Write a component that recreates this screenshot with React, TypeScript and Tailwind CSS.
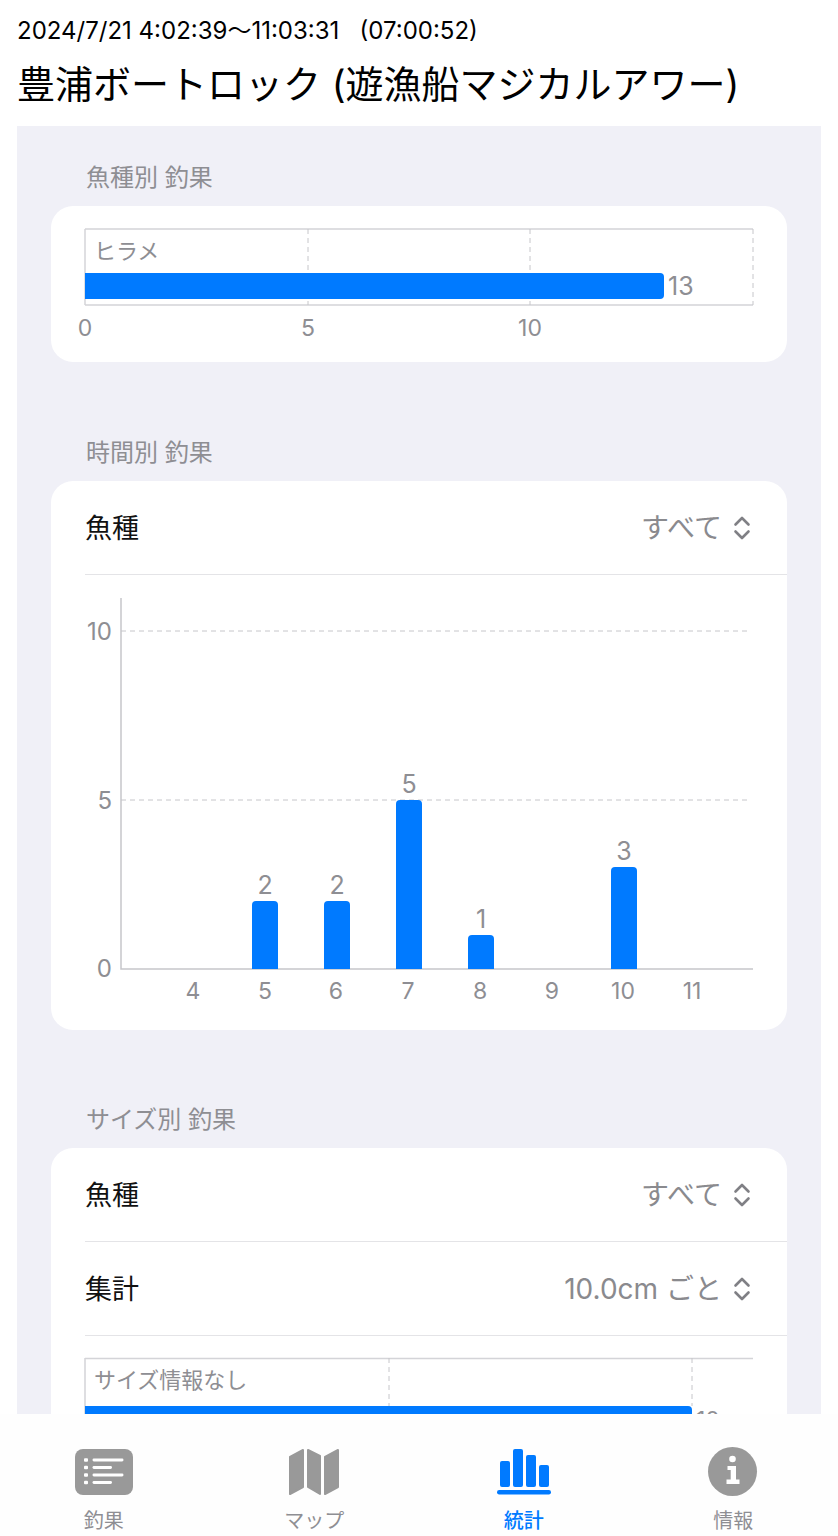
const GRAY = "fill-[#8e8e93]";

const Chevrons = () => (
  <svg width="18" height="26" viewBox="0 0 18 26" fill="none" stroke="#808085" strokeWidth="2.6" strokeLinecap="round" strokeLinejoin="round">
    <path d="M2.5 9.5 9 3l6.5 6.5" />
    <path d="M2.5 16.5 9 23l6.5-6.5" />
  </svg>
);

const PickerRow = ({ label, value }: { label: string; value: string }) => (
  <div className="pl-[34px]">
    <div className="flex h-[94px] items-center justify-between border-b-[1.5px] border-[#e4e4e7] pr-[36px]">
      <span className="mt-[4px] text-[27px] text-[#111]">{label}</span>
      <span className="flex items-center gap-[11px] text-[28px] text-[#8a8a8e]">
        {value}
        <Chevrons />
      </span>
    </div>
  </div>
);

const SectionLabel = ({ children }: { children: string }) => (
  <div className="pl-[69px] pt-[2px] text-[24px] leading-[32px] text-[#8e8e93]">{children}</div>
);

const FishChart = () => (
  <svg width="736" height="156" viewBox="51 206 736 156" className="block">
    <path d="M85 229H753M85 305H753M85 229V305" stroke="#d4d4d8" strokeWidth="1.5" fill="none" />
    <path d="M308 229V305M530 229V305M753 229V305" stroke="#c6c6ca" strokeWidth="1" strokeDasharray="5 4" fill="none" />
    <path d="M85 273H660a4 4 0 0 1 4 4V295a4 4 0 0 1-4 4H85Z" fill="#007aff" />
    <text x="94" y="259" className={`text-[22px] ${GRAY}`}>ヒラメ</text>
    <text x="668" y="295" className={`text-[25px] ${GRAY}`}>13</text>
    {[["0", 85], ["5", 308], ["10", 530]].map(([t, x]) => (
      <text key={t} x={x} y="336" textAnchor="middle" className={`text-[23px] ${GRAY}`}>{t}</text>
    ))}
  </svg>
);

const hourBars = [
  { x: 252, v: 2, top: 901 },
  { x: 324, v: 2, top: 901 },
  { x: 396, v: 5, top: 800 },
  { x: 468, v: 1, top: 935 },
  { x: 611, v: 3, top: 867 },
];
const hourTicks = [[4, 193], [5, 265], [6, 336], [7, 408], [8, 480], [9, 552], [10, 623], [11, 692]];

const HourChart = () => (
  <svg width="736" height="455" viewBox="51 575 736 455" className="block">
    <path d="M121 598V969H753" stroke="#c6c6ca" strokeWidth="1.5" fill="none" />
    <path d="M121 631H749M121 800H749" stroke="#c6c6ca" strokeWidth="1" strokeDasharray="5 4" fill="none" />
    {[["10", 640], ["5", 809], ["0", 977]].map(([t, y]) => (
      <text key={t} x="112" y={y} textAnchor="end" className={`text-[24px] ${GRAY}`}>{t}</text>
    ))}
    {hourTicks.map(([t, x]) => (
      <text key={t} x={x} y="999" textAnchor="middle" className={`text-[23px] ${GRAY}`}>{t}</text>
    ))}
    {hourBars.map((b) => (
      <g key={b.x}>
        <path d={`M${b.x} 969V${b.top + 4}a4 4 0 0 1 4-4H${b.x + 22}a4 4 0 0 1 4 4V969Z`} fill="#007aff" />
        <text x={b.x + 13} y={b.top - 7} textAnchor="middle" className={`text-[25px] ${GRAY}`}>{b.v}</text>
      </g>
    ))}
  </svg>
);

const SizeChart = () => (
  <svg width="736" height="90" viewBox="51 1336 736 90" className="block">
    <path d="M85 1358.5H753M85 1358V1426" stroke="#d4d4d8" strokeWidth="1.5" fill="none" />
    <path d="M389 1358V1406M692 1358V1406" stroke="#c6c6ca" strokeWidth="1" strokeDasharray="5 4" fill="none" />
    <path d="M85 1406H688a4 4 0 0 1 4 4V1432H85Z" fill="#007aff" />
    <text x="94" y="1388" className={`text-[22px] ${GRAY}`}>サイズ情報なし</text>
    <text x="696" y="1428" className={`text-[23px] ${GRAY}`}>10</text>
  </svg>
);

const ListIcon = () => (
  <svg width="58" height="46" viewBox="0 0 58 46" className="-translate-y-px">
    <rect width="58" height="46" rx="8" fill="#999" />
    {[11, 18.5, 26, 33.5].map((y, i) => (
      <g key={y} fill="#fff">
        <rect x="9" y={y - 1.8} width="4" height="3.6" rx="1" />
        <rect x="17.5" y={y - 1.4} width={i % 2 === 0 ? 31 : 19.5} height="2.8" rx="1.4" />
      </g>
    ))}
  </svg>
);

const MapIcon = () => (
  <svg width="50" height="48" viewBox="0 0 50 48" fill="#999" stroke="#999" strokeWidth="2" strokeLinejoin="round">
    <path d="M1 9 14 2V39L1 46Z" />
    <path d="M19 2 31 8V46L19 39Z" />
    <path d="M36 9 49 2V39L36 46Z" />
  </svg>
);

const BarsIcon = () => (
  <svg width="54" height="46" viewBox="0 0 54 46" fill="#007aff" className="-translate-y-px">
    <rect x="3" y="12" width="10" height="26" rx="2" />
    <rect x="16" y="0" width="10" height="38" rx="2" />
    <rect x="29" y="6" width="10" height="32" rx="2" />
    <rect x="42" y="16" width="10" height="22" rx="2" />
    <rect x="0" y="41" width="54" height="4.5" rx="2.2" />
  </svg>
);

const InfoIcon = () => (
  <svg width="50" height="50" viewBox="0 0 50 50">
    <circle cx="24.5" cy="25.5" r="24.5" fill="#999" />
    <circle cx="24.5" cy="13" r="3.3" fill="#fff" />
    <path d="M19.5 20h8.5v13.5h3.5V38H18.5v-4.5h4.2V24h-3.2Z" fill="#fff" />
  </svg>
);

const tabs = [
  { label: "釣果", icon: <ListIcon />, active: false },
  { label: "マップ", icon: <MapIcon />, active: false },
  { label: "統計", icon: <BarsIcon />, active: true },
  { label: "情報", icon: <InfoIcon />, active: false },
];

export default function App() {
  return (
    <div className="flex h-[1536px] w-[838px] flex-col overflow-hidden bg-white font-['Inter','Noto_Sans_CJK_JP',sans-serif]">
      {/* Header */}
      <header className="h-[126px] shrink-0 pl-[17px] pt-[16px] text-black">
        <div className="text-[24px] leading-[30px] whitespace-pre">2024/7/21 4:02:39〜11:03:31   (07:00:52)</div>
        <h1 className="mt-[13px] text-[38px] leading-[50px] whitespace-nowrap">豊浦ボートロック (遊漁船マジカルアワー)</h1>
      </header>

      {/* Stats */}
      <main className="mx-[17px] min-h-0 flex-1 overflow-hidden bg-[#f0f0f7] pt-[34px]">
        <SectionLabel>魚種別 釣果</SectionLabel>
        <section className="mx-[34px] mt-[12px] overflow-hidden rounded-[22px] bg-white">
          <FishChart />
        </section>

        <div className="mt-[73px]">
          <SectionLabel>時間別 釣果</SectionLabel>
        </div>
        <section className="mx-[34px] mt-[12px] overflow-hidden rounded-[22px] bg-white">
          <PickerRow label="魚種" value="すべて" />
          <HourChart />
        </section>

        <div className="mt-[72px]">
          <SectionLabel>サイズ別 釣果</SectionLabel>
        </div>
        <section className="mx-[34px] mt-[12px] overflow-hidden rounded-t-[22px] bg-white">
          <PickerRow label="魚種" value="すべて" />
          <PickerRow label="集計" value="10.0cm ごと" />
          <SizeChart />
        </section>
      </main>

      {/* Tab bar */}
      <nav className="grid h-[122px] shrink-0 grid-cols-4 bg-[#fefefe]">
        {tabs.map((t, i) => (
          <div key={t.label} className={`flex flex-col items-center ${i === 0 ? "-translate-x-px" : ""}`}>
            <div className="flex h-[92px] items-end pb-[10px]">{t.icon}</div>
            <span className={`text-[20px] leading-[30px] ${t.active ? "font-medium text-[#007aff]" : "text-[#8e8e93]"}`}>{t.label}</span>
          </div>
        ))}
      </nav>
    </div>
  );
}
